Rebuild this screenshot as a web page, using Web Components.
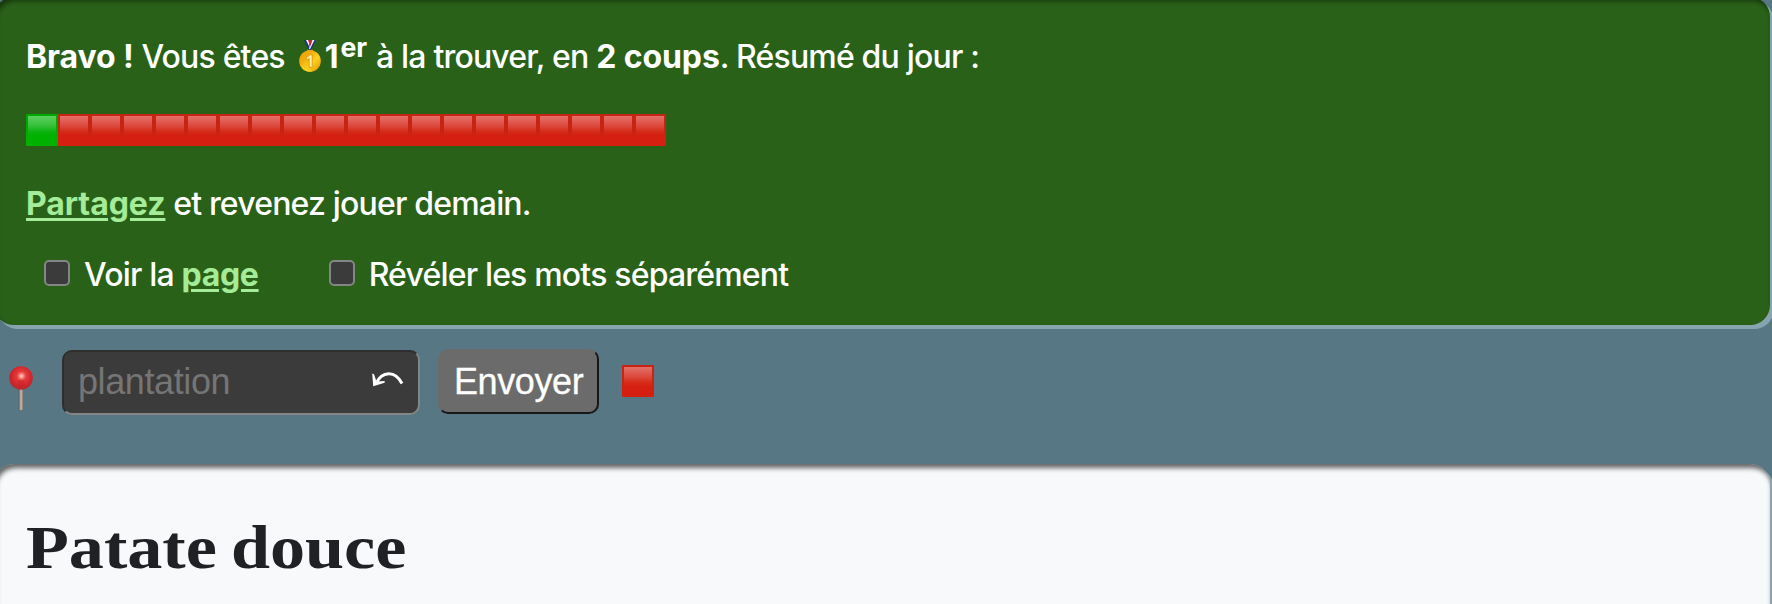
<!DOCTYPE html>
<html lang="fr">
<head>
<meta charset="utf-8">
<title>Patate douce</title>
<style>
html,body{margin:0;background:#567783}
body{width:1772px;height:604px;overflow:hidden;font-family:Inter,sans-serif;color:#fff}
</style>
</head>
<body>
<game-app></game-app>
<script>
const define=(name,html,init)=>customElements.define(name,class extends HTMLElement{
  constructor(){super();this.attachShadow({mode:'open'}).innerHTML=html;if(init)init(this)}
});
define('game-square',`<style>
:host{display:block;box-sizing:border-box;width:32px;height:32px;padding:2px;background:linear-gradient(var(--edge,#c82413) 50%,var(--d,#d51f11) 75%);border-radius:1px}
div{height:30px;background:linear-gradient(var(--a,#e4716a),var(--b,#dc4a3e) 32%,var(--c,#d62f1b) 50%,var(--d,#d51f11) 64%)}
:host([kind=green]){--edge:#00a803;--a:#5ccf61;--b:#36c03a;--c:#10b313;--d:#00b100}
</style><div></div>`);
define('game-medal',`<style>:host{display:block;width:22px;height:32px}svg{display:block}</style>
<svg width="22" height="32" viewBox="0 0 22 32"><defs><linearGradient id="g" x2="1" y2="1"><stop stop-color="#e9a30c"/><stop offset=".3" stop-color="#f2ab0c"/><stop offset=".6" stop-color="#ffd01d"/><stop offset="1" stop-color="#d68d06"/></linearGradient></defs>
<path d="M5 0h3l4 8-2 2Z" fill="#17318e"/><path d="M7 0h2.5l3 7-1 2Z" fill="#fff"/><path d="M9.2 0h1.8l1 5-1 2Z" fill="#d9232b"/>
<path d="M17 0h-2l-5 10h2Z" fill="#17318e"/><path d="M15.5 0h-2.5l-3 9h1Z" fill="#fff"/><path d="M13.5 0h-2l-1.5 5 1 2Z" fill="#d9232b"/>
<path d="M8 9.8h6v2H8Z" fill="#d69a1b"/><circle cx="11" cy="21" r="10.8" fill="url(#g)"/><path d="M3.5 27a9.5 9.5 0 0 0 9 4" fill="none" stroke="#ffd82c"/>
<path d="m7 18 4-3.2h2.2v12.5h-3V18.5l-2.5 1.6Z" fill="#fff0a0" stroke="#cf8d0c" stroke-width=".7"/></svg>`);
define('game-pin',`<style>:host{display:block;width:24px;height:45px}svg{display:block}</style>
<svg width="24" height="45" viewBox="0 0 24 45"><defs><radialGradient id="p" cx=".52" cy=".42" r=".58"><stop stop-color="#ffe0dc"/><stop offset=".14" stop-color="#ff8b83"/><stop offset=".34" stop-color="#e53b3b"/><stop offset=".75" stop-color="#d0242a"/><stop offset="1" stop-color="#ac2c32"/></radialGradient><linearGradient id="n"><stop stop-color="#5d5753"/><stop offset=".5" stop-color="#d0bdb0"/><stop offset="1" stop-color="#796c66"/></linearGradient></defs>
<rect x="9.7" y="22" width="4.6" height="22" rx="1" fill="url(#n)"/><circle cx="12" cy="12" r="11.8" fill="url(#p)"/><path d="M8 15.5q4-4 8 0-1 4-4 7-3-3-4-7" fill="#b51f29" opacity=".35"/></svg>`);
define('game-check',`<style>:host{display:flex;align-items:center;height:40px}i{box-sizing:border-box;width:26px;height:26px;border:2px solid #858585;border-radius:5px;background:#3b3b3b;margin:0 14px 4px 0}
span{white-space:pre}</style><i></i><span><slot></slot></span>`);
define('text-run',`<style>:host{display:inline-block;white-space:pre}:host([bold]){font-weight:750}:host([link]){font-weight:750;color:#a5ec98;text-decoration:underline;text-decoration-thickness:3px;text-underline-offset:3px}</style><slot></slot>`);
define('game-panel',`<style>:host{display:block;box-sizing:border-box;margin-left:-6px;width:1776px;border-radius:20px;padding:0 32px}</style><slot></slot>`);
define('game-guess',`<style>
:host{display:flex;align-items:flex-start;flex:none;height:139px;padding-left:9px;font:36px/40px "Liberation Sans",Arial,sans-serif}
game-pin{margin-top:41px}
.field{display:flex;justify-content:space-between;box-sizing:border-box;width:358px;height:65px;margin:25px 0 0 29px;padding:10px 14px 0;border:2px solid;border-color:#2e2e2e #858585 #858585 #2e2e2e;border-radius:10px;background:#3b3b3b;color:#757575;letter-spacing:-.4px}
svg{margin-top:10px}
.send{box-sizing:border-box;width:161px;height:65px;margin:24px 0 0 18px;padding:11px 0 0 14px;border:2px solid;border-color:#6b6b6b #171717 #171717 #6b6b6b;border-radius:10px;background:#6b6b6b;color:#fff;letter-spacing:-.4px;-webkit-text-stroke:.3px #fff}
game-square{margin:40px 0 0 23px}
</style><game-pin></game-pin><div class="field"><text-run>plantation</text-run><svg width="32" height="18" viewBox="0 0 32 18"><path d="M4 11.5C10-1 23-2 30 11.5" fill="none" stroke="#fff" stroke-width="3"/><path d="M.2 1.5 2 2.2 4.5 9.5 12.7 9 12.6 10.8 1.2 14.2Z" fill="#fff"/></svg></div><div class="send"><text-run>Envoyer</text-run></div><game-square></game-square>`);
define('game-app',`<style>
:host{display:flex;flex-direction:column;height:604px;overflow:hidden;font-size:32px;line-height:40px;font-weight:450;letter-spacing:-.82px}
[bold]{letter-spacing:-.1px}[link]{letter-spacing:-.07px}
.four [link]{letter-spacing:-.3px}
.win{height:328px;margin-top:-3px;background:#2a6118;box-shadow:inset 2px 4px 5px rgba(0,0,0,.45),4px 4px #87a5b1;flex:none}
.row{display:flex}
.one{padding-top:40px;height:77px}
.squares{height:70px}
game-medal{margin:3px 4px 0 14px}
.sup{font-size:26.67px;margin:-10px 9px 0 2px}
.three{height:71px}
.four{padding-left:18px}
.article{flex:none;height:180px;color:#202124;background:#f8f9fb;box-shadow:inset 2px 4px 5px rgba(0,0,0,.6),4px 4px #87a5b1}
h1{margin:0;padding-top:49px;font:700 61px/70px "Liberation Serif",serif;letter-spacing:0;word-spacing:-3px}
h1 text-run{transform:scaleX(1.15);transform-origin:0 50%}
</style>
<game-panel class="win">
<div class="row one"><text-run bold>Bravo !</text-run><text-run> Vous êtes</text-run><game-medal></game-medal><text-run bold>1</text-run><text-run bold class="sup">er</text-run><text-run>à la trouver, en </text-run><text-run bold>2 coups</text-run><text-run>. Résumé du jour :</text-run></div>
<div class="row squares"></div>
<div class="row three"><text-run link>Partagez</text-run><text-run> et revenez jouer demain.</text-run></div>
<div class="row four"><game-check><text-run>Voir la </text-run><text-run link>page</text-run></game-check><game-check style="margin-left:70px"><text-run>Révéler les mots séparément</text-run></game-check></div>
</game-panel>
<game-guess></game-guess>
<game-panel class="article"><h1><text-run>Patate douce</text-run></h1></game-panel>`,
el=>{const s=el.shadowRoot.querySelector('.squares');s.innerHTML='<game-square kind="green"></game-square>'+'<game-square></game-square>'.repeat(19);
});
</script>
</body>
</html>
